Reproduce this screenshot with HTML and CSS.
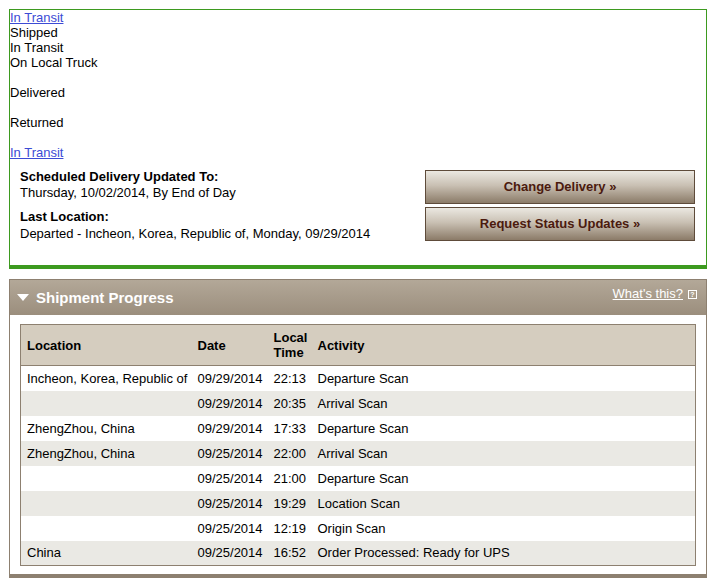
FILE: index.html
```html
<!DOCTYPE html>
<html lang="en">

<head>
  <meta charset="UTF-8">
  <meta name="viewport" content="width=device-width, initial-scale=1.0">
  <title>Tracking Detail</title>
  <link rel="stylesheet" href="styles.css">
</head>

<body>
  <div class="status-box">
    <div class="status-list">
      <a href="#">In Transit</a><br>
      Shipped<br>
      In Transit<br>
      On Local Truck<br>
      <br>
      Delivered<br>
      <br>
      Returned<br>
      <br>
      <a href="#">In Transit</a>
    </div>

    <div class="delivery">
      <div class="delivery-info">
        <p><strong>Scheduled Delivery Updated To:</strong><br>Thursday, 10/02/2014, By End of Day</p>
        <p><strong>Last Location:</strong><br>Departed - Incheon, Korea, Republic of, Monday, 09/29/2014</p>
      </div>
      <div class="delivery-actions">
        <a href="#" class="action-btn">Change Delivery &raquo;</a>
        <a href="#" class="action-btn">Request Status Updates &raquo;</a>
      </div>
    </div>
  </div>

  <div class="panel">
    <div class="panel-header">
      <h2><span class="caret"></span>Shipment Progress</h2>
      <a href="#" class="help-link">What's this?</a>
      <span class="help-icon">?</span>
    </div>

    <div class="panel-body">
      <table class="progress">
        <colgroup>
          <col style="width:171px">
          <col style="width:76px">
          <col style="width:44px">
          <col>
        </colgroup>
        <thead>
          <tr>
            <th>Location</th>
            <th>Date</th>
            <th>Local<br>Time</th>
            <th>Activity</th>
          </tr>
        </thead>
        <tbody>
          <tr><td>Incheon, Korea, Republic of</td><td>09/29/2014</td><td>22:13</td><td>Departure Scan</td></tr>
          <tr><td></td><td>09/29/2014</td><td>20:35</td><td>Arrival Scan</td></tr>
          <tr><td>ZhengZhou, China</td><td>09/29/2014</td><td>17:33</td><td>Departure Scan</td></tr>
          <tr><td>ZhengZhou, China</td><td>09/25/2014</td><td>22:00</td><td>Arrival Scan</td></tr>
          <tr><td></td><td>09/25/2014</td><td>21:00</td><td>Departure Scan</td></tr>
          <tr><td></td><td>09/25/2014</td><td>19:29</td><td>Location Scan</td></tr>
          <tr><td></td><td>09/25/2014</td><td>12:19</td><td>Origin Scan</td></tr>
          <tr><td>China</td><td>09/25/2014</td><td>16:52</td><td>Order Processed: Ready for UPS</td></tr>
        </tbody>
      </table>
    </div>
  </div>
</body>
</html>
```

FILE: styles.css
```css
:root {
  --green: #3d9a1f;
  --taupe: #8d8070;
  --head-bg: #d5cdbf;
  --row-alt: #eae9e4;
  --link: #3c4bd5;
}

* {
  box-sizing: border-box;
}

body {
  margin: 9px 7px 9px 9px;
  font-family: "Liberation Sans", Arial, sans-serif;
  font-size: 13px;
  color: #000;
  background: #fff;
}

a {
  color: var(--link);
}

.status-box {
  border: 1px solid var(--green);
  border-bottom-width: 4px;
}

.status-list {
  line-height: 15px;
  padding: 0;
}

.delivery {
  display: flex;
  justify-content: space-between;
  padding: 9px 11px 23px 10px;
}

.delivery-info p {
  margin: 0 0 7px;
  line-height: 16px;
}

.delivery-info p:last-child {
  margin-bottom: 0;
  line-height: 17px;
}

.delivery-actions {
  display: flex;
  flex-direction: column;
  gap: 3px;
  width: 270px;
  margin-top: 1px;
}

.action-btn {
  display: block;
  height: 34px;
  line-height: 32px;
  text-align: center;
  font-weight: bold;
  color: #4b1a0e;
  text-decoration: none;
  border: 1px solid #5e4b3a;
  background: linear-gradient(#ebe8e1, #c9c0b3 45%, #8b7b68);
}

.panel {
  margin-top: 10px;
  border: 1px solid var(--taupe);
  border-bottom-width: 4px;
}

.panel-header {
  display: flex;
  align-items: center;
  height: 35px;
  padding: 0 9px 0 7px;
  background: linear-gradient(#b3a898, #9b8e7d);
  color: #fff;
}

.panel-header h2 {
  flex: 1;
  margin: -1px 0 0;
  font-size: 15px;
  display: flex;
  align-items: center;
}

.caret {
  width: 0;
  height: 0;
  border-left: 6px solid transparent;
  border-right: 6px solid transparent;
  border-top: 7px solid #fff;
  margin: 1px 7px 0 0;
}

.help-link {
  color: #fff;
  font-size: 13px;
  margin-top: -8px;
}

.help-icon {
  width: 9px;
  height: 9px;
  border: 1px solid #fff;
  font-size: 7px;
  line-height: 7px;
  text-align: center;
  font-weight: bold;
  margin: -6px 0 0 5px;
}

.panel-body {
  padding: 9px 10px 8px;
}

.progress {
  width: 100%;
  border-collapse: collapse;
  border: 1px solid var(--taupe);
  table-layout: fixed;
}

.progress th {
  background: var(--head-bg);
  border-bottom: 1px solid var(--taupe);
  text-align: left;
  font-weight: bold;
  height: 41px;
  line-height: 15px;
  padding: 0 6px;
  vertical-align: middle;
}

.progress td {
  height: 25px;
  padding: 0 6px;
  white-space: nowrap;
}

.progress tbody tr:nth-child(even) td {
  background: var(--row-alt);
}
```
